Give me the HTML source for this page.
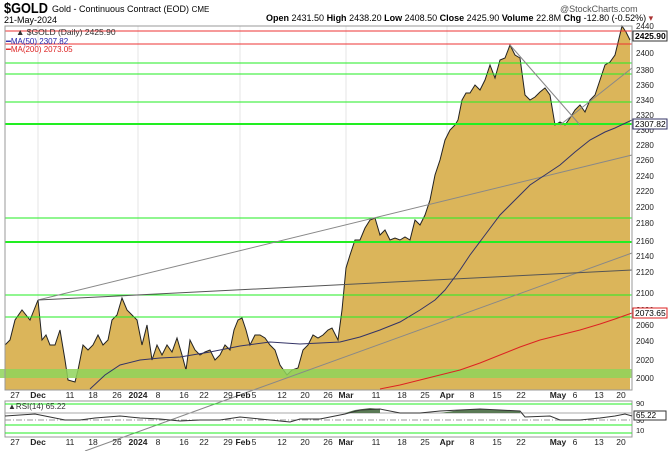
<!DOCTYPE html><html><head><style>
body{margin:0;width:670px;height:451px;background:#fff;font-family:"Liberation Sans",sans-serif;overflow:hidden;position:relative}
.t{position:absolute;white-space:nowrap}
</style></head><body>
<div class="t" style="left:4px;top:0px;font-size:15px;font-weight:bold;transform:scaleX(.85);transform-origin:left">$GOLD</div>
<div class="t" style="left:52px;top:4px;font-size:9px">Gold - Continuous Contract (EOD) <span style="font-size:8px">CME</span></div>
<div class="t" style="left:4px;top:15px;font-size:9px">21-May-2024</div>
<div class="t" style="left:560px;top:4px;font-size:9px;color:#555">@StockCharts.com</div>
<div class="t" style="left:266px;top:13px;font-size:9px"><b>Open</b> 2431.50 <b>High</b> 2438.20 <b>Low</b> 2408.50 <b>Close</b> 2425.90 <b>Volume</b> 22.8M <b>Chg</b> -12.80 (-0.52%) <span style="color:#a33">▾</span></div>
<svg width="670" height="451" style="position:absolute;left:0;top:0" font-family="Liberation Sans" font-size="8">
<g stroke="#e4e4e4" stroke-width="1">
<line x1="38" y1="26" x2="38" y2="390"/><line x1="138" y1="26" x2="138" y2="390"/><line x1="240" y1="26" x2="240" y2="390"/><line x1="346" y1="26" x2="346" y2="390"/><line x1="447" y1="26" x2="447" y2="390"/><line x1="560" y1="26" x2="560" y2="390"/>
</g>
<polygon fill="#dbb55a" points="5,390 5,345 10,340 15,320 22,310 30,320 34,310 38,300 42,340 46,335 50,345 55,345 60,330 65,360 68,380 75,382 78,370 83,345 88,350 93,345 98,335 103,345 108,340 112,320 117,315 122,298 127,310 132,315 137,320 142,345 147,325 152,360 157,345 162,355 167,345 172,352 177,338 182,355 186,370 190,340 195,350 200,355 205,352 210,350 215,360 220,355 225,345 230,350 234,330 238,320 242,318 246,330 250,345 255,335 260,335 265,338 270,345 275,350 280,365 287,375 292,370 298,368 303,350 308,345 313,335 318,338 323,335 328,330 332,328 338,340 342,310 346,268 350,255 355,240 360,240 365,228 370,220 375,218 380,235 385,230 390,240 395,238 400,240 405,237 410,240 415,220 420,225 425,215 430,200 435,175 440,160 445,140 450,130 455,125 458,120 462,100 466,93 470,93 475,85 480,90 485,80 490,65 495,78 500,60 505,58 510,45 515,55 520,58 525,95 530,100 535,97 540,92 545,88 550,95 555,125 560,122 565,125 570,118 575,110 580,105 585,112 590,100 595,95 600,80 605,65 610,62 615,55 622,26 626,32 630,40 630,390"/>
<polyline fill="none" stroke="#222" stroke-width="1" points="5,345 10,340 15,320 22,310 30,320 34,310 38,300 42,340 46,335 50,345 55,345 60,330 65,360 68,380 75,382 78,370 83,345 88,350 93,345 98,335 103,345 108,340 112,320 117,315 122,298 127,310 132,315 137,320 142,345 147,325 152,360 157,345 162,355 167,345 172,352 177,338 182,355 186,370 190,340 195,350 200,355 205,352 210,350 215,360 220,355 225,345 230,350 234,330 238,320 242,318 246,330 250,345 255,335 260,335 265,338 270,345 275,350 280,365 287,375 292,370 298,368 303,350 308,345 313,335 318,338 323,335 328,330 332,328 338,340 342,310 346,268 350,255 355,240 360,240 365,228 370,220 375,218 380,235 385,230 390,240 395,238 400,240 405,237 410,240 415,220 420,225 425,215 430,200 435,175 440,160 445,140 450,130 455,125 458,120 462,100 466,93 470,93 475,85 480,90 485,80 490,65 495,78 500,60 505,58 510,45 515,55 520,58 525,95 530,100 535,97 540,92 545,88 550,95 555,125 560,122 565,125 570,118 575,110 580,105 585,112 590,100 595,95 600,80 605,65 610,62 615,55 622,26 626,32 630,40"/>
<rect x="0" y="369" width="632" height="9" fill="#8fd45a" opacity=".85"/>
<g stroke="#2e2" stroke-width="1">
<line x1="5" y1="63" x2="632" y2="63"/><line x1="5" y1="74" x2="632" y2="74"/><line x1="5" y1="102" x2="632" y2="102"/><line x1="5" y1="124" x2="632" y2="124" stroke-width="2"/><line x1="5" y1="218" x2="632" y2="218"/><line x1="5" y1="242" x2="632" y2="242" stroke-width="2"/><line x1="5" y1="295" x2="632" y2="295"/><line x1="5" y1="317" x2="632" y2="317"/>
</g>
<line x1="5" y1="31" x2="632" y2="31" stroke="#e33"/><line x1="5" y1="44" x2="632" y2="44" stroke="#e33"/>
<g stroke="#888" stroke-width="1" fill="none">
<line x1="38" y1="300" x2="632" y2="155"/><line x1="85" y1="451" x2="632" y2="253"/><line x1="510" y1="45" x2="580" y2="125"/><line x1="560" y1="125" x2="632" y2="68"/>
</g>
<line x1="38" y1="300" x2="632" y2="270" stroke="#555"/>
<polyline fill="none" stroke="#336" stroke-width="1" points="90,389 105,375 120,365 140,360 160,358 180,357 210,352 240,346 270,342 300,344 320,343 340,342 360,337 380,330 400,322 420,310 435,300 445,290 460,270 470,255 485,235 500,215 515,200 530,185 545,175 560,165 575,152 590,140 605,132 615,128 632,120"/>
<polyline fill="none" stroke="#d22" stroke-width="1" points="380,389 400,385 420,380 440,375 460,370 480,363 500,355 520,347 540,340 560,335 580,330 600,324 615,319 632,313"/>
<rect x="5" y="26" width="627" height="364" fill="none" stroke="#999" stroke-width="1"/>
<text x="16" y="35" font-size="8.5" fill="#333">▲ $GOLD (Daily) 2425.90</text>
<text x="6" y="44" font-size="8" fill="#22a">━MA(50) 2307.82</text>
<text x="6" y="52" font-size="8" fill="#d22">━MA(200) 2073.05</text>
<g fill="#222" font-size="8">
<text x="636" y="29">2440</text><text x="636" y="56">2400</text><text x="636" y="73">2380</text><text x="636" y="88">2360</text><text x="636" y="103">2340</text><text x="636" y="118">2320</text><text x="636" y="133">2300</text><text x="636" y="148">2280</text><text x="636" y="163">2260</text><text x="636" y="179">2240</text><text x="636" y="194">2220</text><text x="636" y="210">2200</text><text x="636" y="226">2180</text><text x="636" y="244">2160</text><text x="636" y="259">2140</text><text x="636" y="275">2120</text><text x="636" y="296">2100</text><text x="636" y="313">2080</text><text x="636" y="328">2060</text><text x="636" y="344">2040</text><text x="636" y="363">2020</text><text x="636" y="381">2000</text>
</g>
<rect x="633" y="31" width="34" height="10" fill="#fff" stroke="#333"/><text x="635" y="39" font-weight="bold" font-size="8.5">2425.90</text>
<rect x="633" y="119" width="34" height="10" fill="#fff" stroke="#336"/><text x="635" y="127" font-size="8.5">2307.82</text>
<rect x="633" y="308" width="34" height="10" fill="#fff" stroke="#d22"/><text x="635" y="316" font-size="8.5">2073.65</text>
<g font-size="8.5" fill="#222" text-anchor="middle">
<text x="15" y="398">27</text><text x="38" y="398" font-weight="bold">Dec</text><text x="70" y="398">11</text><text x="93" y="398">18</text><text x="117" y="398">26</text><text x="138" y="398" font-weight="bold">2024</text><text x="158" y="398">8</text><text x="184" y="398">16</text><text x="204" y="398">22</text><text x="228" y="398">29</text><text x="243" y="398" font-weight="bold">Feb</text><text x="254" y="398">5</text><text x="282" y="398">12</text><text x="305" y="398">20</text><text x="328" y="398">26</text><text x="346" y="398" font-weight="bold">Mar</text><text x="376" y="398">11</text><text x="402" y="398">18</text><text x="425" y="398">25</text><text x="447" y="398" font-weight="bold">Apr</text><text x="472" y="398">8</text><text x="497" y="398">15</text><text x="521" y="398">22</text><text x="558" y="398" font-weight="bold">May</text><text x="575" y="398">6</text><text x="599" y="398">13</text><text x="621" y="398">20</text>
</g>
<g transform="translate(0,47)" font-size="8.5" fill="#222" text-anchor="middle">
<text x="15" y="398">27</text><text x="38" y="398" font-weight="bold">Dec</text><text x="70" y="398">11</text><text x="93" y="398">18</text><text x="117" y="398">26</text><text x="138" y="398" font-weight="bold">2024</text><text x="158" y="398">8</text><text x="184" y="398">16</text><text x="204" y="398">22</text><text x="228" y="398">29</text><text x="243" y="398" font-weight="bold">Feb</text><text x="254" y="398">5</text><text x="282" y="398">12</text><text x="305" y="398">20</text><text x="328" y="398">26</text><text x="346" y="398" font-weight="bold">Mar</text><text x="376" y="398">11</text><text x="402" y="398">18</text><text x="425" y="398">25</text><text x="447" y="398" font-weight="bold">Apr</text><text x="472" y="398">8</text><text x="497" y="398">15</text><text x="521" y="398">22</text><text x="558" y="398" font-weight="bold">May</text><text x="575" y="398">6</text><text x="599" y="398">13</text><text x="621" y="398">20</text>
</g>
<rect x="5" y="401" width="627" height="36" fill="none" stroke="#999"/>
<line x1="5" y1="404" x2="632" y2="404" stroke="#2e2"/><line x1="5" y1="425" x2="632" y2="425" stroke="#2e2"/><line x1="5" y1="433" x2="632" y2="433" stroke="#2e2"/>
<line x1="5" y1="413" x2="632" y2="413" stroke="#aaa"/><line x1="5" y1="420" x2="632" y2="420" stroke="#999" stroke-dasharray="6,2,1,2"/>
<polygon fill="#5a7a55" points="345,413 355,410 370,408 380,409 380,413"/><polygon fill="#5a7a55" points="440,413 460,410 480,409 500,410 520,411 520,413"/>
<polyline fill="none" stroke="#333" points="5,416 20,415 35,414 50,417 65,420 80,420 95,418 120,416 140,418 160,419 180,421 200,420 220,420 240,417 260,419 280,421 290,422 300,419 320,419 345,414 360,410 380,409 400,413 420,413 440,411 460,410 480,409 500,410 520,411 525,417 550,416 560,420 580,420 600,418 615,416 625,414 632,416"/>
<text x="8" y="409" font-size="8" fill="#333">▲RSI(14) 65.22</text>
<g font-size="7.5" fill="#222"><text x="636" y="406">90</text><text x="636" y="423">30</text><text x="636" y="433">10</text></g>
<rect x="634" y="411" width="32" height="9" fill="#fff" stroke="#333"/><text x="636" y="418" font-size="8">65.22</text>
</svg>
</body></html>
